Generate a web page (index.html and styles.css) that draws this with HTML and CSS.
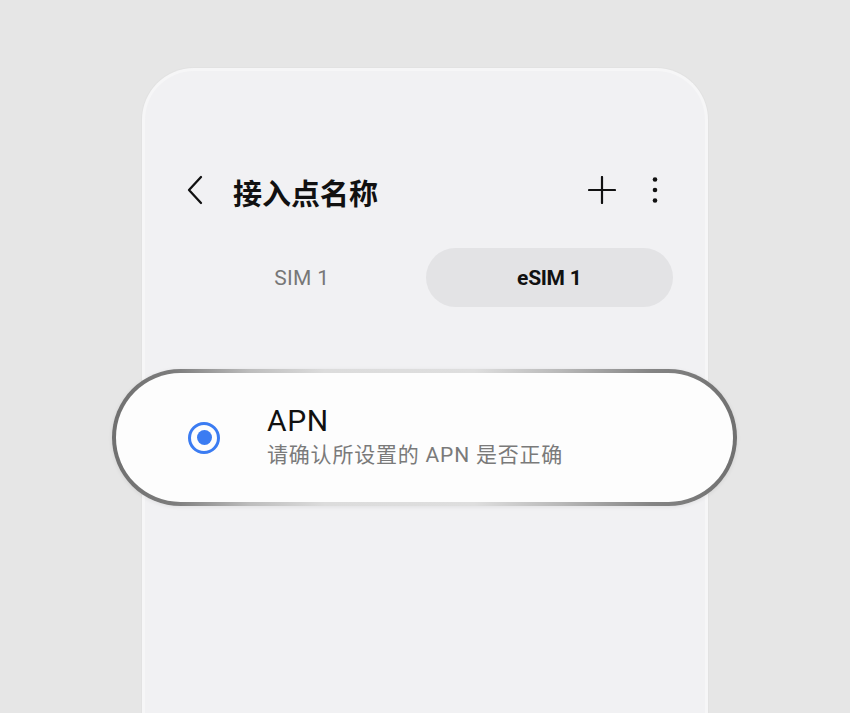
FILE: index.html
```html
<!DOCTYPE html>
<html lang="zh-CN">
<head>
<meta charset="utf-8">
<title>接入点名称</title>
<link rel="stylesheet" href="styles.css">
</head>
<body>
<div class="page">
  <div class="phone">
    <div class="header">
      <svg class="back" width="18" height="32" viewBox="0 0 18 32"><path d="M15 3 L3 16 L15 29" fill="none" stroke="#111" stroke-width="2.3" stroke-linecap="round" stroke-linejoin="round"/></svg>
      <div class="title">接入点名称</div>
      <div class="actions">
        <svg class="plus" width="28" height="28" viewBox="0 0 28 28"><path d="M14 1 V27 M1 14 H27" stroke="#111" stroke-width="2.2" stroke-linecap="round"/></svg>
        <svg class="more" width="10" height="28" viewBox="0 0 10 28"><circle cx="5" cy="3.5" r="2.3" fill="#111"/><circle cx="5" cy="14" r="2.3" fill="#111"/><circle cx="5" cy="24.5" r="2.3" fill="#111"/></svg>
      </div>
    </div>
    <div class="tabs">
      <div class="tab">SIM 1</div>
      <div class="tab active">eSIM 1</div>
    </div>
    <div class="apn">
      <div class="radio"><div class="dot"></div></div>
      <div class="apn-text">
        <div class="apn-name">APN</div>
        <div class="apn-sub">请确认所设置的 APN 是否正确</div>
      </div>
    </div>
  </div>
</div>
</body>
</html>
```

FILE: styles.css
```css
html, body {
  margin: 0;
  padding: 0;
  width: 850px;
  height: 713px;
  overflow: hidden;
  background: #e6e6e6;
}
.page {
  display: flex;
  justify-content: center;
  padding-top: 68px;
  font-family: Roboto, "Noto Sans CJK SC", sans-serif;
}
.phone {
  box-sizing: border-box;
  width: 566px;
  height: 645px;
  background: #f1f1f3;
  border: 3px solid #f6f6f7;
  border-bottom: none;
  border-radius: 52px 52px 0 0;
  box-shadow: 0 0 0 1px #e2e2e2;
  display: flex;
  flex-direction: column;
}
.header {
  display: flex;
  align-items: center;
  height: 56px;
  margin-top: 91px;
  padding: 0 45px 0 41px;
}
.back {
  display: block;
  flex: none;
}
.title {
  margin-left: 29px;
  font-family: "Noto Sans CJK SC", sans-serif;
  font-weight: 600;
  font-size: 29px;
  color: #111;
  line-height: 40px;
  padding-top: 4px;
}
.actions {
  margin-left: auto;
  display: flex;
  align-items: center;
  gap: 34px;
}
.actions svg {
  display: block;
}
.tabs {
  display: flex;
  margin: 30px 32px 0 33px;
  height: 59px;
}
.tab {
  flex: 1;
  display: flex;
  align-items: center;
  justify-content: center;
  border-radius: 30px;
  font-size: 21px;
  color: #777;
  letter-spacing: 0.3px;
}
.tab.active {
  background: #e3e3e5;
  color: #111;
  font-weight: 700;
  letter-spacing: -0.3px;
}
.apn {
  box-sizing: border-box;
  height: 137px;
  margin: 62px -32px 0 -33px;
  border: 4px solid transparent;
  border-radius: 70px;
  background:
    linear-gradient(#fdfdfd, #fdfdfd) padding-box,
    linear-gradient(to right, #707070 0%, #7c7c7c 10%, #bdbdbd 22%, #dcdcdc 34%, #dedede 58%, #b8b8b8 72%, #858585 86%, #707070 100%) border-box;
  box-shadow: 0 1px 4px rgba(0,0,0,0.08);
  display: flex;
  align-items: center;
  padding-left: 72px;
}
.radio {
  box-sizing: border-box;
  width: 32px;
  height: 32px;
  border: 3px solid #3b7cf2;
  border-radius: 50%;
  display: flex;
  align-items: center;
  justify-content: center;
  flex: none;
}
.dot {
  width: 15px;
  height: 15px;
  border-radius: 50%;
  background: #3b7cf2;
}
.apn-text {
  margin-left: 47px;
  display: flex;
  flex-direction: column;
}
.apn-name {
  font-size: 30px;
  line-height: 34px;
  color: #111;
  margin-top: -2px;
  letter-spacing: 0.6px;
}
.apn-sub {
  font-family: Roboto, "Noto Sans CJK SC", sans-serif;
  font-size: 21px;
  line-height: 28px;
  color: #7a7a7a;
  margin-top: 3px;
  letter-spacing: 0.8px;
}
```
